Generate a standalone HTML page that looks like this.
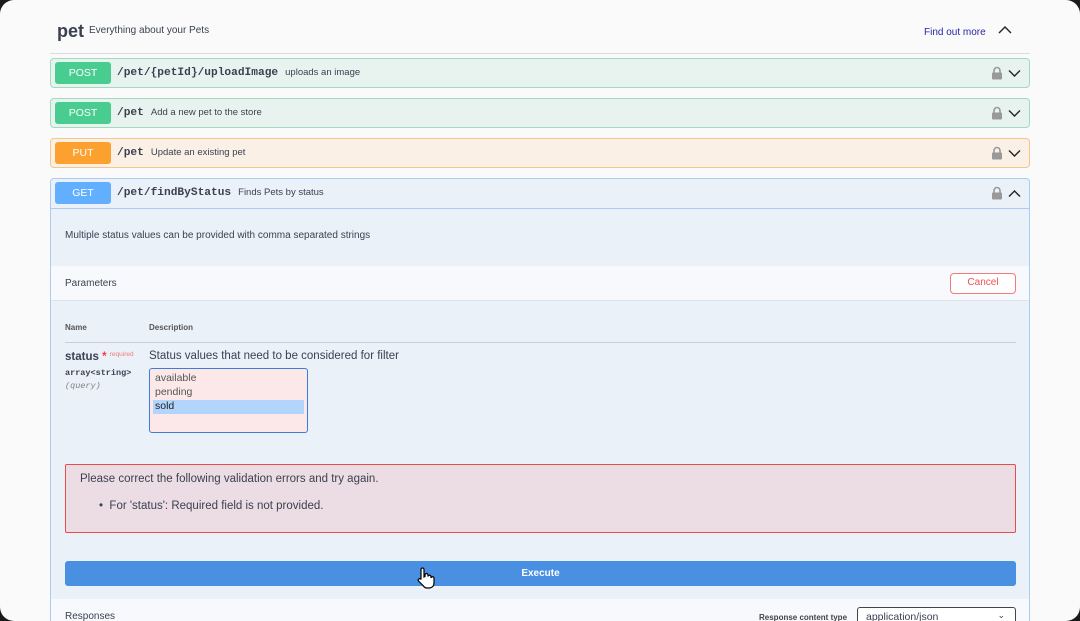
<!DOCTYPE html>
<html><head><style>
*{box-sizing:border-box;margin:0;padding:0}
body{width:1080px;height:621px;overflow:hidden;background:#1a1a1a;font-family:"Liberation Sans",sans-serif;color:#3b4151}
.win{position:absolute;left:0;top:0;width:1080px;height:621px;background:#fafafa;border-radius:14px;overflow:hidden}
.abs{position:absolute}
.op{position:absolute;left:50px;width:980px;border-radius:4px;border:1px solid}
.badge{position:absolute;left:4px;top:3px;width:56px;height:22px;border-radius:3px;color:#fff;font-size:10.5px;text-align:center;line-height:22px}
.path{position:absolute;left:66px;top:8px;font-family:"Liberation Mono",monospace;font-weight:bold;font-size:11.2px;color:#3b4151}
.desc{font-family:"Liberation Sans",sans-serif;font-weight:normal;font-size:9.5px;margin-left:7px;color:#3b4151}
.lock{position:absolute;right:26px;top:7px}
.chev{position:absolute;right:8px;top:10px}
</style></head><body>
<div class="win">
<div class="abs" style="left:57px;top:21px;font-size:18px;font-weight:bold;color:#3b4151">pet</div>
<div class="abs" style="left:89px;top:25px;font-size:10px">Everything about your Pets</div>
<div class="abs" style="left:924px;top:27px;font-size:10px;color:#2727a8">Find out more</div>
<svg class="abs" style="left:998px;top:25px" width="14" height="9"><path d="M1 8 L7 2 L13 8" fill="none" stroke="#222" stroke-width="1.4"/></svg>
<div class="abs" style="left:50px;top:53px;width:980px;height:1px;background:#dcdce2"></div>

<div class="op" style="top:58px;height:30px;background:#e8f3ef;border-color:#9fdcbe"><div class="badge" style="background:#49cc90">POST</div><div class="path">/pet/{petId}/uploadImage<span class="desc">uploads an image</span></div>
<svg class="lock" width="12" height="14"><path d="M3 7V4.5a3 3 0 0 1 6 0V7" fill="none" stroke="#999" stroke-width="1.6"/><rect x="1" y="6.5" width="10" height="7" rx="1" fill="#999"/></svg><svg class="chev" width="13" height="9"><path d="M1 1.5L6.5 7L12 1.5" fill="none" stroke="#222" stroke-width="1.4"/></svg></div>
<div class="op" style="top:98px;height:30px;background:#e8f3ef;border-color:#9fdcbe"><div class="badge" style="background:#49cc90">POST</div><div class="path">/pet<span class="desc">Add a new pet to the store</span></div>
<svg class="lock" width="12" height="14"><path d="M3 7V4.5a3 3 0 0 1 6 0V7" fill="none" stroke="#999" stroke-width="1.6"/><rect x="1" y="6.5" width="10" height="7" rx="1" fill="#999"/></svg><svg class="chev" width="13" height="9"><path d="M1 1.5L6.5 7L12 1.5" fill="none" stroke="#222" stroke-width="1.4"/></svg></div>
<div class="op" style="top:138px;height:30px;background:#faf0e6;border-color:#f3c68c"><div class="badge" style="background:#fca130">PUT</div><div class="path">/pet<span class="desc">Update an existing pet</span></div>
<svg class="lock" width="12" height="14"><path d="M3 7V4.5a3 3 0 0 1 6 0V7" fill="none" stroke="#999" stroke-width="1.6"/><rect x="1" y="6.5" width="10" height="7" rx="1" fill="#999"/></svg><svg class="chev" width="13" height="9"><path d="M1 1.5L6.5 7L12 1.5" fill="none" stroke="#222" stroke-width="1.4"/></svg></div>

<div class="op" style="top:178px;height:460px;background:#ebf1f9;border-color:#a9cdf2">
 <div class="abs" style="left:0;top:0;width:978px;height:30px;border-bottom:1px solid #a9cdf2"><div class="badge" style="background:#61affe">GET</div><div class="path">/pet/findByStatus<span class="desc">Finds Pets by status</span></div>
 <svg class="lock" width="12" height="14"><path d="M3 7V4.5a3 3 0 0 1 6 0V7" fill="none" stroke="#999" stroke-width="1.6"/><rect x="1" y="6.5" width="10" height="7" rx="1" fill="#999"/></svg><svg class="chev" width="13" height="9"><path d="M1 7.5L6.5 2L12 7.5" fill="none" stroke="#222" stroke-width="1.4"/></svg></div>
 <div class="abs" style="left:14px;top:51px;font-size:10px">Multiple status values can be provided with comma separated strings</div>
 <div class="abs" style="left:0;top:87px;width:978px;height:35px;background:#f7f9fc;border-bottom:1px solid #dde3ea"></div>
 <div class="abs" style="left:14px;top:99px;font-size:10px">Parameters</div>
 <div class="abs" style="left:899px;top:94px;width:66px;height:21px;border:1.5px solid #f07b7b;border-radius:4px;color:#f05050;font-size:10px;text-align:center;line-height:18px;background:#fff">Cancel</div>
 <div class="abs" style="left:14px;top:144px;font-size:8px;font-weight:bold;color:#555">Name</div>
 <div class="abs" style="left:98px;top:144px;font-size:8px;font-weight:bold;color:#555">Description</div>
 <div class="abs" style="left:14px;top:163px;width:951px;height:1px;background:#c8d0da"></div>
 <div class="abs" style="left:14px;top:172px;font-size:11.5px;font-weight:bold">status <span style="color:#f93e3e">*</span> <span style="font-size:6.5px;font-weight:normal;color:#f07b7b;vertical-align:top">required</span></div>
 <div class="abs" style="left:14px;top:189px;font-family:'Liberation Mono',monospace;font-size:8.5px;font-weight:bold">array&lt;string&gt;</div>
 <div class="abs" style="left:14px;top:202px;font-family:'Liberation Mono',monospace;font-size:8.5px;font-style:italic;color:#808080">(query)</div>
 <div class="abs" style="left:98px;top:171px;font-size:11.5px">Status values that need to be considered for filter</div>
 <div class="abs" style="left:98px;top:189px;width:159px;height:65px;background:#fce8e8;border:1.5px solid #3f7bd8;border-radius:3px;font-size:10.5px;padding:3px 3px">
  <div style="height:14px;padding-left:2px;color:#555">available</div>
  <div style="height:14px;padding-left:2px;color:#555">pending</div>
  <div style="height:14px;padding-left:2px;background:#b3d4fb;color:#222">sold</div>
 </div>
 <div class="abs" style="left:14px;top:285px;width:951px;height:69px;background:#ebdde3;border:1px solid #ed4a4a;border-radius:2px"></div>
 <div class="abs" style="left:29px;top:294px;font-size:11.5px">Please correct the following validation errors and try again.</div>
 <div class="abs" style="left:48px;top:321px;font-size:11.5px">•&nbsp; For 'status': Required field is not provided.</div>
 <div class="abs" style="left:14px;top:382px;width:951px;height:25px;background:#4a90e2;border-radius:3px;color:#fff;font-size:10px;font-weight:bold;text-align:center;line-height:25px">Execute</div>
 <div class="abs" style="left:0;top:420px;width:978px;height:40px;background:#f7f9fc"></div>
 <div class="abs" style="left:14px;top:432px;font-size:10px">Responses</div>
 <div class="abs" style="left:708px;top:434px;font-size:8px;font-weight:bold;color:#444">Response content type</div>
 <div class="abs" style="left:806px;top:428px;width:159px;height:22px;border:1.5px solid #444;border-radius:3px;background:#fff;font-size:10.5px;padding:3px 8px">application/json<span style="position:absolute;right:10px;top:2px;font-size:9px">⌄</span></div>
</div>
<svg class="abs" style="left:416px;top:566px" width="20" height="24"><path d="M5 3.5a1.5 1.5 0 0 1 3 0V11l1-.5V9a1.5 1.5 0 0 1 3 0v1.5a1.5 1.5 0 0 1 3 .5v1a1.5 1.5 0 0 1 3 .5V17c0 3-2 5-5 5h-2c-2 0-3-1-4-2.5L2.5 15a1.5 1.5 0 0 1 2.3-1.9L5 13.5Z" fill="#fff" stroke="#000" stroke-width="1.2"/></svg>
</div>
</body></html>
